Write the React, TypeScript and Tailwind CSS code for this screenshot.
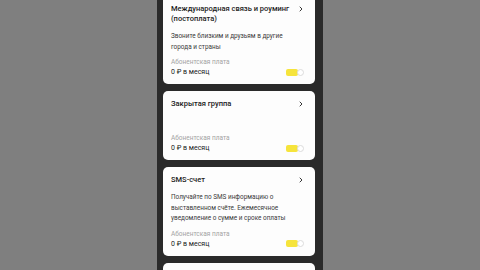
import { ChevronRight } from "lucide-react";

type Option = {
  title: string[];
  desc?: string[];
};

const options: Option[] = [
  {
    title: ["Международная связь и роуминг", "(постоплата)"],
    desc: ["Звоните близким и друзьям в другие", "города и страны"],
  },
  {
    title: ["Закрытая группа"],
  },
  {
    title: ["SMS-счет"],
    desc: [
      "Получайте по SMS информацию о",
      "выставленном счёте. Ежемесячное",
      "уведомление о сумме и сроке оплаты",
    ],
  },
];

function Toggle() {
  return (
    <div className="flex items-center">
      <div className="w-[12px] h-[7px] rounded-[2px] bg-[#f6e43c]" />
      <div className="w-[7px] h-[7px] -ml-[1px] rounded-full bg-white border border-[#dcdcdc]" />
    </div>
  );
}

function OptionCard({ o, first }: { o: Option; first?: boolean }) {
  return (
    <div
      className={`bg-[#fdfdfd] rounded-[5px] pl-[8px] pr-[12px] pt-[8px] pb-[7px] ${
        first ? "-mt-[4px]" : ""
      }`}
    >
      <div className="flex">
        <div className="flex-1 min-w-0 text-[7.5px] leading-[10px] font-medium text-[#1c1c1c] whitespace-nowrap">
          {o.title.map((t) => (
            <div key={t}>{t}</div>
          ))}
        </div>
        <ChevronRight
          className="w-[8px] h-[8px] mt-[1px] -mr-[2px] shrink-0 text-[#111]"
          strokeWidth={2.5}
        />
      </div>
      {o.desc ? (
        <div className="mt-[7px] text-[6.4px] leading-[10.5px] text-[#3a3a3a] whitespace-nowrap">
          {o.desc.map((t) => (
            <div key={t}>{t}</div>
          ))}
        </div>
      ) : (
        <div className="h-[19px]" />
      )}
      <div className="mt-[6px] flex items-end justify-between">
        <div className="whitespace-nowrap">
          <div className="text-[6.5px] leading-[9px] text-[#a3a3a3]">Абонентская плата</div>
          <div className="text-[7px] leading-[10px] text-[#222]">0 ₽ в месяц</div>
        </div>
        <div className="h-[10px] flex items-center mr-[-1px]">
          <Toggle />
        </div>
      </div>
    </div>
  );
}

export default function App() {
  return (
    <div
      className="w-[480px] h-[270px] overflow-hidden bg-[#7f7f7f] flex justify-center"
      style={{ fontFamily: "Roboto, 'Noto Sans', sans-serif" }}
    >
      <div className="w-[166px] h-full bg-[#2a2a2a] pl-[6px] pr-[8px] flex flex-col gap-[7px]">
        {options.map((o, i) => (
          <OptionCard key={o.title[0]} o={o} first={i === 0} />
        ))}
        <div className="bg-[#fdfdfd] rounded-[5px] h-[40px] shrink-0" />
      </div>
    </div>
  );
}
